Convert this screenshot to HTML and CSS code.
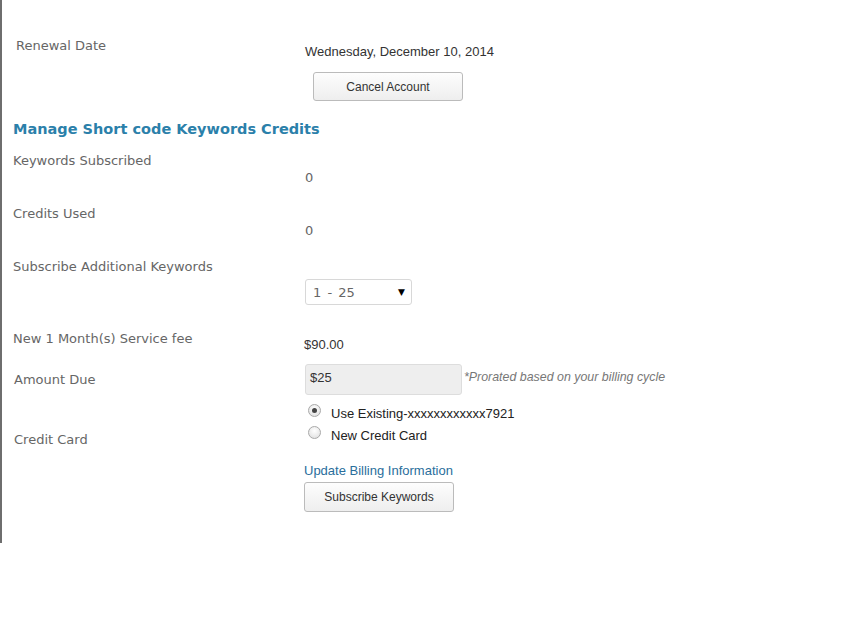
FILE: index.html
```html
<!DOCTYPE html>
<html>
<head>
<meta charset="utf-8">
<link rel="stylesheet" href="styles.css">
</head>
<body>
<div class="page">
  <div class="row row-renewal">
    <div class="label label-renewal">Renewal Date</div>
    <div class="value-col">
      <div class="value date">Wednesday, December 10, 2014</div>
      <button class="btn btn-cancel">Cancel Account</button>
    </div>
  </div>

  <h2 class="heading">Manage Short code Keywords Credits</h2>

  <div class="row row-kw">
    <div class="label">Keywords Subscribed</div>
    <div class="value-col"><div class="num">0</div></div>
  </div>

  <div class="row row-credits">
    <div class="label">Credits Used</div>
    <div class="value-col"><div class="num">0</div></div>
  </div>

  <div class="row row-sub">
    <div class="label">Subscribe Additional Keywords</div>
    <div class="value-col">
      <div class="select"><span class="select-text">1 - 25</span><span class="select-arrow">&#9660;</span></div>
    </div>
  </div>

  <div class="row row-fee">
    <div class="label">New 1 Month(s) Service fee</div>
    <div class="value-col"><div class="value fee">$90.00</div></div>
  </div>

  <div class="row row-due">
    <div class="label label-due">Amount Due</div>
    <div class="value-col due-col">
      <div class="input">$25</div>
      <span class="note">*Prorated based on your billing cycle</span>
    </div>
  </div>

  <div class="row row-card">
    <div class="label label-card">Credit Card</div>
    <div class="value-col">
      <div class="radio-line"><span class="radio checked"></span><span class="radio-text">Use Existing-xxxxxxxxxxxx7921</span></div>
      <div class="radio-line"><span class="radio"></span><span class="radio-text">New Credit Card</span></div>
      <a class="link" href="#">Update Billing Information</a>
      <button class="btn btn-sub">Subscribe Keywords</button>
    </div>
  </div>
</div>
</body>
</html>
```

FILE: styles.css
```css
html, body {
  margin: 0;
  padding: 0;
  background: #fff;
}

.page {
  box-sizing: border-box;
  height: 543px;
  border-left: 2px solid #6e6e6e;
  padding-top: 38px;
  font-family: "DejaVu Sans", Verdana, sans-serif;
}

.row {
  display: grid;
  grid-template-columns: 303px 1fr;
}

.label {
  font-size: 13px;
  line-height: 16px;
  color: #666;
  padding-left: 11px;
}

.label-renewal { padding-left: 14px; }

.value-col {
  display: flex;
  flex-direction: column;
  align-items: flex-start;
}

.value {
  font-family: "Liberation Sans", Arial, sans-serif;
  font-size: 13px;
  line-height: 16px;
  color: #333;
}

.date { margin-top: 6px; }

.btn {
  font-family: "Liberation Sans", Arial, sans-serif;
  font-size: 12px;
  color: #333;
  width: 150px;
  border: 1px solid #bbb;
  border-radius: 3px;
  background: linear-gradient(#fdfdfd, #eeeeee);
  padding: 0;
  cursor: pointer;
}

.btn-cancel {
  margin-top: 12px;
  margin-left: 8px;
  height: 29px;
}

.heading {
  margin: 19px 0 0 0;
  padding-left: 11px;
  font-size: 14.5px;
  line-height: 18px;
  font-weight: bold;
  color: #2b80aa;
}

.row-kw { margin-top: 15px; }
.row-credits { margin-top: 20px; }
.row-sub { margin-top: 20px; }
.row-fee { margin-top: 26px; }
.row-due { margin-top: 11px; }
.row-card { margin-top: 7px; }

.num {
  margin-top: 17px;
  font-size: 13px;
  line-height: 16px;
  color: #666;
}

.select {
  margin-top: 20px;
  box-sizing: border-box;
  width: 107px;
  height: 26px;
  border: 1px solid #d8d8d8;
  border-radius: 3px;
  background: #fff;
  display: flex;
  align-items: center;
  justify-content: space-between;
  padding: 0 6px 0 7px;
}

.select-text {
  font-size: 13px;
  color: #666;
  word-spacing: 2px;
}

.select-arrow {
  font-size: 9px;
  color: #000;
  font-family: "DejaVu Sans", sans-serif;
}

.fee {
  margin-top: 6px;
  margin-left: -1px;
  font-size: 13px;
}

.due-col {
  flex-direction: row;
  align-items: flex-start;
}

.label-due {
  padding-top: 8px;
  padding-left: 12px;
}

.input {
  box-sizing: border-box;
  width: 157px;
  height: 31px;
  background: #eee;
  border: 1px solid #ddd;
  border-radius: 3px;
  font-family: "Liberation Sans", Arial, sans-serif;
  font-size: 13px;
  color: #333;
  padding: 5px 0 0 4px;
}

.note {
  margin-left: 2px;
  margin-top: 6px;
  font-family: "Liberation Sans", Arial, sans-serif;
  font-style: italic;
  font-size: 12.4px;
  color: #777;
}

.label-card {
  padding-top: 30px;
  padding-left: 12px;
}

.radio-line {
  display: flex;
  align-items: center;
  height: 22px;
}

.radio {
  box-sizing: border-box;
  width: 13px;
  height: 13px;
  margin-left: 3px;
  margin-top: -5px;
  border-radius: 50%;
  border: 1px solid #a9a9a9;
  background: radial-gradient(circle at 50% 35%, #ffffff, #dcdcdc);
  position: relative;
}

.radio.checked::after {
  content: "";
  position: absolute;
  left: 3px;
  top: 3px;
  width: 5px;
  height: 5px;
  border-radius: 50%;
  background: #444;
}

.radio-text {
  margin-left: 10px;
  font-family: "Liberation Sans", Arial, sans-serif;
  font-size: 13px;
  color: #222;
}

.link {
  margin-top: 17px;
  margin-left: -1px;
  font-family: "Liberation Sans", Arial, sans-serif;
  font-size: 13px;
  line-height: 16px;
  color: #2a6e9c;
  text-decoration: none;
}

.btn-sub {
  margin-top: 3px;
  margin-left: -1px;
  height: 30px;
}
```
